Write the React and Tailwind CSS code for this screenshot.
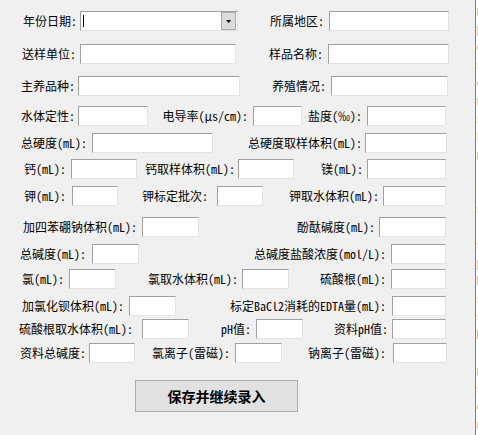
import React from "react";

const FONT = "font-['Noto_Sans_Mono_CJK_SC','Noto_Sans_CJK_SC',sans-serif]";

function Box({ w }) {
  return (
    <div
      className={`${w} h-5 shrink-0 bg-white border border-t-[#a0a0a0] border-l-[#a0a0a0] border-b-[#e3e3e3] border-r-[#e3e3e3]`}
    />
  );
}

function Label({ w, pr, children }) {
  return (
    <div className={`${w} ${pr} shrink-0 text-right whitespace-nowrap leading-5`}>{children}</div>
  );
}

export default function App() {
  const sideLines = [
    "n", "p", "c", "s", "c", "n", "s", "E", "n", "", "r", "s", "", "s", "p", "D", "s", "s", "H", "", "n", "s", "e", "n",
  ];
  return (
    <div className={`w-[478px] h-[435px] bg-[#f0f0f0] flex overflow-hidden text-[12px] text-black ${FONT}`}>
      <div className="w-[475px] shrink-0 flex flex-col">
        {/* Row 1 */}
        <div className="flex items-center h-5 mt-[11px]">
          <Label w="w-[80px]" pr="pr-[3px]">年份日期:</Label>
          <div className="w-[158px] h-5 shrink-0 bg-white border border-t-[#a0a0a0] border-l-[#a0a0a0] border-b-[#e3e3e3] border-r-[#e3e3e3] flex items-center">
            <div className="ml-[2px] w-px h-[12px] bg-black" />
            <div className="ml-auto mr-px w-[15px] h-[18px] bg-[#dcdcdc] border border-[#a9a9a9] flex items-center justify-center">
              <svg width="5" height="3" viewBox="0 0 5 3">
                <path d="M0 0H5L2.5 3Z" fill="#000" />
              </svg>
            </div>
          </div>
          <Label w="w-[91px]" pr="pr-[5px]">所属地区:</Label>
          <Box w="w-[120px]" />
        </div>
        {/* Row 2 */}
        <div className="flex items-center h-5 mt-[13px]">
          <Label w="w-[80px]" pr="pr-[4px]">送样单位:</Label>
          <Box w="w-[156px]" />
          <Label w="w-[92px]" pr="pr-[5px]">样品名称:</Label>
          <Box w="w-[121px]" />
        </div>
        {/* Row 3 */}
        <div className="flex items-center h-5 mt-[12px]">
          <Label w="w-[78px]" pr="pr-[3px]">主养品种:</Label>
          <Box w="w-[162px]" />
          <Label w="w-[91px]" pr="pr-[5px]">养殖情况:</Label>
          <Box w="w-[117px]" />
        </div>
        {/* Row 4 */}
        <div className="flex items-center h-5 mt-[10px]">
          <Label w="w-[78px]" pr="pr-[3px]">水体定性:</Label>
          <Box w="w-[70px]" />
          <Label w="w-[105px]" pr="pr-[5px]">电导率(μs/cm):</Label>
          <Box w="w-[49px]" />
          <Label w="w-[65px]" pr="pr-[5px]">盐度(‰):</Label>
          <Box w="w-[79px]" />
        </div>
        {/* Row 5 */}
        <div className="flex items-center h-5 mt-[7px]">
          <Label w="w-[92px]" pr="pr-[5px]">总硬度(mL):</Label>
          <Box w="w-[121px]" />
          <Label w="w-[152px]" pr="pr-[3px]">总硬度取样体积(mL):</Label>
          <Box w="w-[82px]" />
        </div>
        {/* Row 6 */}
        <div className="flex items-center h-5 mt-[6px]">
          <Label w="w-[71px]" pr="pr-[5px]">钙(mL):</Label>
          <Box w="w-[66px]" />
          <Label w="w-[101px]" pr="pr-[3px]">钙取样体积(mL):</Label>
          <Box w="w-[56px]" />
          <Label w="w-[73px]" pr="pr-[4px]">镁(mL):</Label>
          <Box w="w-[79px]" />
        </div>
        {/* Row 7 */}
        <div className="flex items-center h-5 mt-[7px]">
          <Label w="w-[72px]" pr="pr-[6px]">钾(mL):</Label>
          <Box w="w-[46px]" />
          <Label w="w-[99px]" pr="pr-[9px]">钾标定批次:</Label>
          <Box w="w-[46px]" />
          <Label w="w-[120px]" pr="pr-[4px]">钾取水体积(mL):</Label>
          <Box w="w-[63px]" />
        </div>
        {/* Row 8 */}
        <div className="flex items-center h-5 mt-[11px]">
          <Label w="w-[142px]" pr="pr-[5px]">加四苯硼钠体积(mL):</Label>
          <Box w="w-[57px]" />
          <Label w="w-[180px]" pr="pr-[4px]">酚酞碱度(mL):</Label>
          <Box w="w-[67px]" />
        </div>
        {/* Row 9 */}
        <div className="flex items-center h-5 mt-[7px]">
          <Label w="w-[92px]" pr="pr-[6px]">总碱度(mL):</Label>
          <Box w="w-[47px]" />
          <Label w="w-[252px]" pr="pr-[5px]">总碱度盐酸浓度(mol/L):</Label>
          <Box w="w-[55px]" />
        </div>
        {/* Row 10 */}
        <div className="flex items-center h-5 mt-[5px]">
          <Label w="w-[69px]" pr="pr-[5px]">氯(mL):</Label>
          <Box w="w-[47px]" />
          <Label w="w-[126px]" pr="pr-[4px]">氯取水体积(mL):</Label>
          <Box w="w-[47px]" />
          <Label w="w-[102px]" pr="pr-[5px]">硫酸根(mL):</Label>
          <Box w="w-[55px]" />
        </div>
        {/* Row 11 */}
        <div className="flex items-center h-5 mt-[7px]">
          <Label w="w-[129px]" pr="pr-[5px]">加氯化钡体积(mL):</Label>
          <Box w="w-[47px]" />
          <Label w="w-[216px]" pr="pr-[6px]">标定BaCl2消耗的EDTA量(mL):</Label>
          <Box w="w-[54px]" />
        </div>
        {/* Row 12 */}
        <div className="flex items-center h-5 mt-[3px]">
          <Label w="w-[142px]" pr="pr-[9px]">硫酸根取水体积(mL):</Label>
          <Box w="w-[47px]" />
          <Label w="w-[67px]" pr="pr-[5px]">pH值:</Label>
          <Box w="w-[47px]" />
          <Label w="w-[89px]" pr="pr-[4px]">资料pH值:</Label>
          <Box w="w-[54px]" />
        </div>
        {/* Row 13 */}
        <div className="flex items-center h-5 mt-[4px]">
          <Label w="w-[89px]" pr="pr-[3px]">资料总碱度:</Label>
          <Box w="w-[46px]" />
          <Label w="w-[100px]" pr="pr-[5px]">氯离子(雷磁):</Label>
          <Box w="w-[47px]" />
          <Label w="w-[111px]" pr="pr-[7px]">钠离子(雷磁):</Label>
          <Box w="w-[54px]" />
        </div>
        {/* Button */}
        <div className="mt-[17px] ml-[135px] w-[163px] h-[32px] bg-[#e1e1e1] border border-[#adadad] flex items-center justify-center font-bold text-[14px] font-['Noto_Sans_CJK_SC',sans-serif]">
          保存并继续录入
        </div>
      </div>
      <div className="flex-1 border-l border-[#3b8ed8] bg-white overflow-hidden">
        <div className="pt-[1px] pl-px text-[12px] leading-[18px] text-[#222]">
          {sideLines.map((t, i) => (
            <div key={i} className="h-[18px] whitespace-nowrap">
              {t || "\u00a0"}
            </div>
          ))}
        </div>
      </div>
    </div>
  );
}
